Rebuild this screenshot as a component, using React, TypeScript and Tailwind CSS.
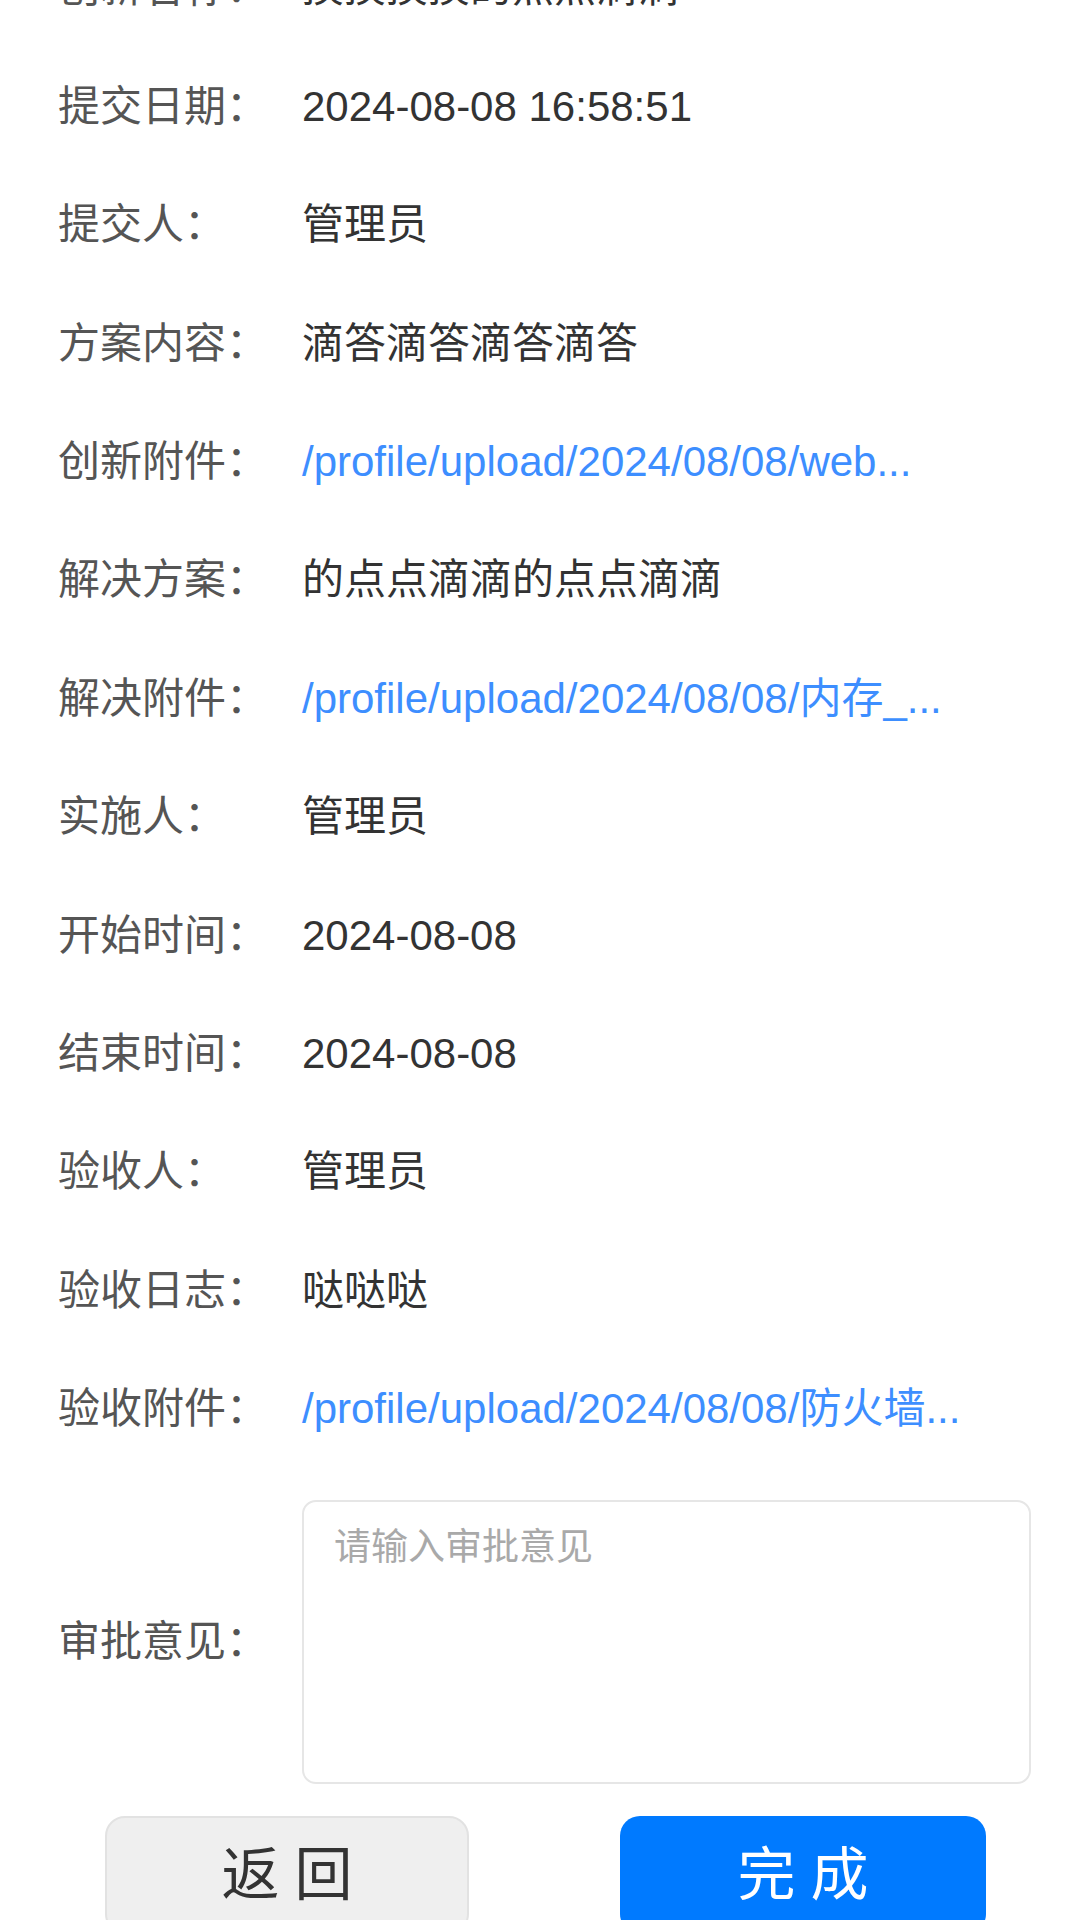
import React from "react";

const rows: { label: string; value: string; link?: boolean }[] = [
  { label: "创新名称：", value: "摸摸摸摸的点点滴滴" },
  { label: "提交日期：", value: "2024-08-08 16:58:51" },
  { label: "提交人：", value: "管理员" },
  { label: "方案内容：", value: "滴答滴答滴答滴答" },
  { label: "创新附件：", value: "/profile/upload/2024/08/08/web...", link: true },
  { label: "解决方案：", value: "的点点滴滴的点点滴滴" },
  { label: "解决附件：", value: "/profile/upload/2024/08/08/内存_...", link: true },
  { label: "实施人：", value: "管理员" },
  { label: "开始时间：", value: "2024-08-08" },
  { label: "结束时间：", value: "2024-08-08" },
  { label: "验收人：", value: "管理员" },
  { label: "验收日志：", value: "哒哒哒" },
  { label: "验收附件：", value: "/profile/upload/2024/08/08/防火墙...", link: true },
];

export default function App() {
  return (
    <div
      className="w-[1080px] h-[1920px] overflow-hidden bg-white"
      style={{ fontFamily: '"Liberation Sans", Arial, "Noto Sans CJK SC", sans-serif' }}
    >
      <div className="mt-[-70.6px] pl-[58px] pr-[49px]">
        {rows.map((r, i) => (
          <div key={i} className="flex items-center h-[118.4px] text-[42px] leading-[1.2]">
            <div className="w-[244px] shrink-0 text-[#555555] whitespace-nowrap">{r.label}</div>
            <div
              className={
                r.link
                  ? "text-[#3d8eff] whitespace-nowrap"
                  : "text-[#333333] whitespace-nowrap"
              }
            >
              {r.value}
            </div>
          </div>
        ))}
        <div className="flex items-center mt-[31.4px]">
          <div className="w-[244px] shrink-0 text-[42px] text-[#555555]">审批意见：</div>
          <textarea
            className="flex-1 h-[284px] resize-none rounded-[14px] border-2 border-[#e6e6e6] bg-white pl-[30px] pr-[20px] pt-[18px] text-[37px] leading-[1.5] text-[#333333] placeholder:text-[#a9a9a9] outline-none"
            placeholder="请输入审批意见"
            style={{ fontFamily: '"Liberation Sans", Arial, "Noto Sans CJK SC", sans-serif' }}
          />
        </div>
      </div>
      <div className="flex mt-[32px] pl-[105px] gap-[151px]">
        <button className="w-[364px] h-[118px] rounded-[20px] border-2 border-[#e2e2e2] bg-[#efefef] text-[58px] text-[#333333] tracking-[15px] pl-[15px] flex items-center justify-center">
          返回
        </button>
        <button className="w-[366px] h-[118px] rounded-[20px] bg-[#007aff] text-[58px] text-white tracking-[15px] pl-[15px] flex items-center justify-center">
          完成
        </button>
      </div>
    </div>
  );
}
